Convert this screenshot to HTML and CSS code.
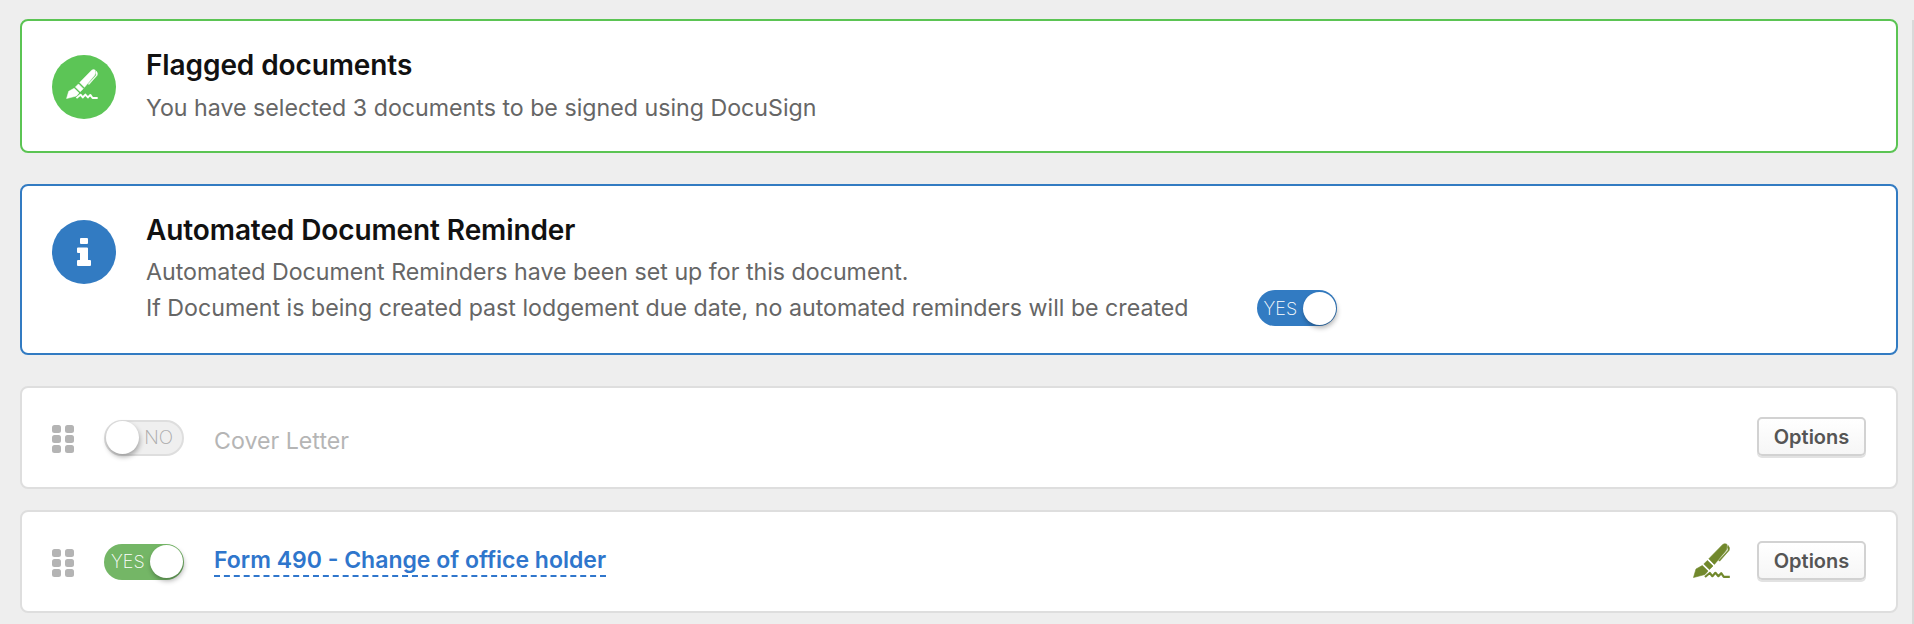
FILE: index.html
```html
<!DOCTYPE html>
<html lang="en">
<head>
<meta charset="utf-8">
<title>Documents</title>
<link rel="stylesheet" href="styles.css">
</head>
<body>
<svg class="defs" width="0" height="0" aria-hidden="true">
  <symbol id="pen" viewBox="0 0 37 35">
    <g fill="currentColor" stroke="currentColor" stroke-width=".6" stroke-linejoin="round">
      <path d="M15.800 15.800 29.800 1.400Q32 0 34 1.400L33.800 4.600Q34 6.200 33 7.600L21.400 21.400Z"/>
      <path d="M35 2.400Q37.400 4.600 36 7.600L26.600 18.200 25.800 17.400 34.800 7.600Q35.600 6 34.400 4.600Z"/>
      <path d="M14.400 17.400 20 23 16.400 26.600 10.800 21Z"/>
      <path d="M.5 34.500 3 26 9.300 22.500 15 28 12 31.500Z"/>
    </g>
    <path fill="none" stroke="currentColor" stroke-width="2.200" stroke-linejoin="round" d="M12 34 16.800 30 19.400 33.200 22.400 29.800 25.400 33.200 28.200 30.200 30.800 33.800 36.800 33.800"/>
  </symbol>
</svg>
<main class="page">
  <section class="notice notice-green">
    <span class="badge badge-green">
      <svg class="badge-pen" width="32" height="30"><use href="#pen"/></svg>
    </span>
    <div class="notice-body">
      <h2 class="notice-title">Flagged documents</h2>
      <p class="notice-text">You have selected 3 documents to be signed using DocuSign</p>
    </div>
  </section>

  <section class="notice notice-blue">
    <span class="badge badge-blue">
      <svg class="badge-info" width="14" height="28" viewBox="0 0 14 28"><path fill="#fff" d="M4 0h6q1 0 1 1v4q0 1-1 1H4Q3 6 3 5V1q0-1 1-1ZM1 9.500h9q1 0 1 1V22h2q1 0 1 1v4q0 1-1 1H1q-1 0-1-1v-4q0-1 1-1h2v-7H1q-1 0-1-1v-3.500q0-1 1-1Z"/></svg>
    </span>
    <div class="notice-body">
      <h2 class="notice-title">Automated Document Reminder</h2>
      <p class="notice-text">Automated Document Reminders have been set up for this document.</p>
      <div class="notice-line">
        <p class="notice-text">If Document is being created past lodgement due date, no automated reminders will be created</p>
        <span class="toggle toggle-blue"><span class="toggle-label">YES</span><span class="knob"></span></span>
      </div>
    </div>
  </section>

  <section class="row">
    <span class="grip"><i></i><i></i><i></i><i></i><i></i><i></i></span>
    <span class="toggle toggle-off"><span class="knob"></span><span class="toggle-label">NO</span></span>
    <span class="row-name row-name-off">Cover Letter</span>
    <button class="options" type="button">Options</button>
  </section>

  <section class="row row-last">
    <span class="grip"><i></i><i></i><i></i><i></i><i></i><i></i></span>
    <span class="toggle toggle-green"><span class="toggle-label">YES</span><span class="knob"></span></span>
    <a class="row-name row-link" href="#">Form 490 - Change of office holder</a>
    <svg class="row-pen" width="37" height="35"><use href="#pen"/></svg>
    <button class="options" type="button">Options</button>
  </section>
</main>
<div class="edge"></div>
</body>
</html>
```

FILE: styles.css
```css
* { box-sizing: border-box; }
html, body { height: 100%; }
body {
  margin: 0;
  display: flex;
  background: #eeeeee;
  font-family: Inter, "Open Sans", sans-serif;
  overflow: hidden;
}
.defs { position: absolute; }
.page {
  flex: 1;
  padding: 19px 14px 0 20px;
}
.edge {
  width: 2px;
  margin-top: 20px;
  background: #d9d9d9;
}
.notice {
  display: flex;
  background: #fff;
  border: 2px solid;
  border-radius: 8px;
  margin-bottom: 31px;
  padding-left: 30px;
}
.notice-green { height: 134px; border-color: #5bc453; }
.notice-blue { height: 171px; border-color: #327bc2; }
.badge {
  flex: none;
  width: 64px;
  height: 64px;
  border-radius: 50%;
  display: flex;
  align-items: center;
  justify-content: center;
  margin-top: 34px;
  color: #fff;
}
.badge-green { background: #5cc556; }
.badge-blue { background: #327bc2; }
.badge-pen { margin: -6px 4px 0 0; }
.notice-body { margin-left: 30px; padding-top: 27px; }
.notice-title {
  margin: 0 0 8px;
  font-size: 28px;
  line-height: 35px;
  font-weight: 600;
  letter-spacing: -.1px;
  color: #111;
}
.notice-text {
  margin: 0;
  font-size: 23.200px;
  line-height: 35px;
  font-weight: 400;
  color: #666;
}
.notice-line { display: flex; align-items: center; }
.notice-line .toggle { margin-left: 68px; }
.notice-blue .notice-title { margin-bottom: 7px; }

.toggle {
  flex: none;
  width: 80px;
  height: 36px;
  border-radius: 18px;
  display: flex;
  align-items: center;
  justify-content: space-between;
  padding: 0 1px 0 7px;
  font-size: 18px;
  font-weight: 200;
}
.knob {
  width: 33px;
  height: 33px;
  border-radius: 50%;
  background: #fff;
  box-shadow: 1px 3px 5px rgba(0, 0, 0, .3);
}
.toggle-blue { background: #327bc2; color: #fff; }
.toggle-green { background: #74b666; color: #fff; }
.toggle-off {
  background: #efefef;
  border: 2px solid #dedede;
  color: #a8a8a8;
  font-size: 19px;
  padding: 0 9px 0 0;
}
.row {
  display: flex;
  align-items: center;
  height: 103px;
  margin-bottom: 21px;
  padding: 0 30px;
  background: #fff;
  border: 2px solid #dedede;
  border-radius: 8px;
}
.grip {
  flex: none;
  display: grid;
  grid-template-columns: 9px 9px;
  grid-auto-rows: 8px;
  gap: 2px 4px;
  margin: 3px 30px 0 0;
}
.grip i { background: #b4b4b4; border-radius: 2.500px; }
.row-name { margin-left: 30px; font-size: 23.200px; line-height: 30px; }
.row-name-off { margin-top: 6px; color: #b5b5b5; }
.row-link {
  margin-top: -2px;
  color: #2f76cc;
  font-size: 23px;
  font-weight: 600;
  text-decoration: none;
  border-bottom: 2px dashed #2f76cc;
}
.row-pen { margin: -2px 27px 0 auto; color: #71882c; }
.options {
  flex: none;
  width: 109px;
  height: 39px;
  margin: -2px 0 0 auto;
  padding: 0;
  font: 600 20px Inter, "Open Sans", sans-serif;
  color: #555;
  background: linear-gradient(#fff, #f6f6f6);
  border: 2px solid #d2d2d2;
  border-radius: 5px;
  box-shadow: 0 2px 0 #e2e2e2;
}
.row-pen + .options { margin-left: 0; }
```
